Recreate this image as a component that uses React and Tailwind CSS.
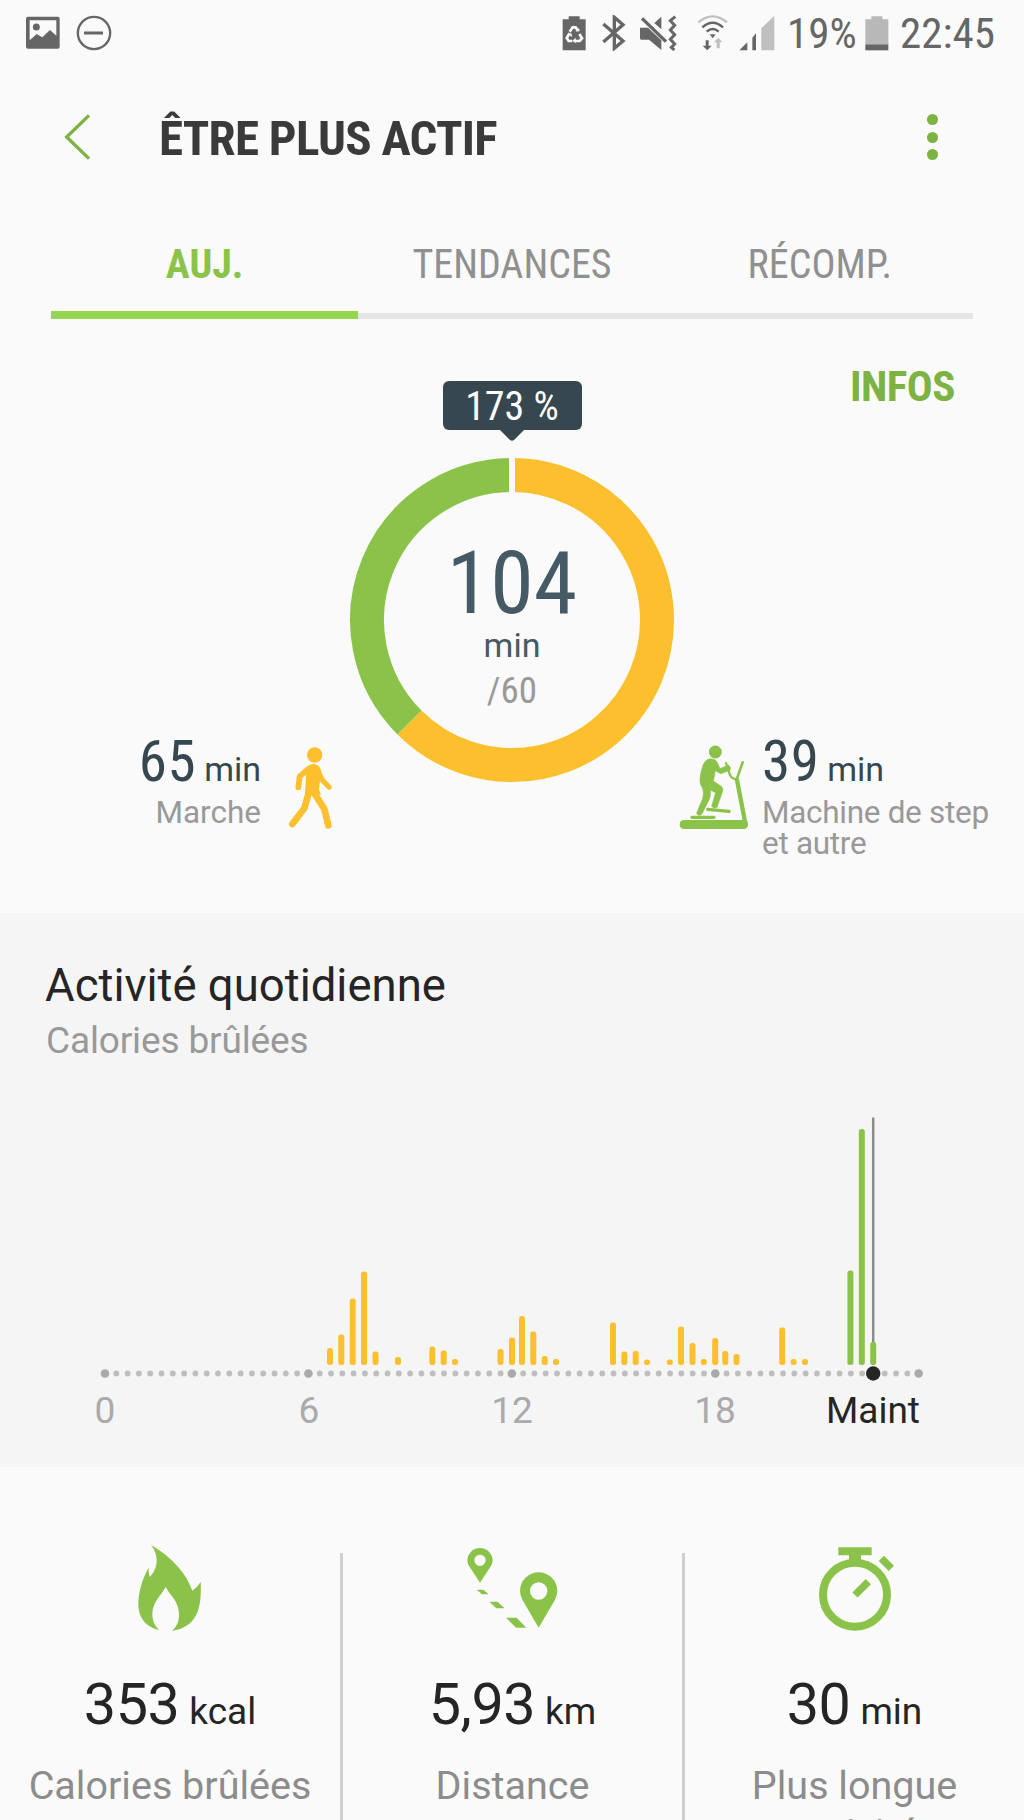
const condensed = "font-['Roboto_Condensed',Roboto,sans-serif] font-stretch-condensed";

// offset from midnight in px, bar height in px
const activityBars = [
  [225, 17], [236.3, 30.5], [247.7, 66.5], [259, 93.5], [270.5, 13.5], [293, 8],
  [327.3, 18.5], [338.7, 14.5], [350, 6], [395.5, 16], [407, 27.5], [417, 49],
  [428.3, 33.5], [439.7, 9], [451, 6], [508, 42.5], [519.3, 13.5], [530.7, 14],
  [542, 5.5], [564.8, 5.5], [576, 38.5], [587.5, 22], [598.8, 6], [610.2, 27],
  [620.3, 14], [631.5, 11], [677.2, 37.5], [688.6, 6], [700, 6],
  [745.4, 94.5, 'step'], [756.8, 236, 'step'], [768.2, 23, 'step'],
];

function StatusBar() {
  return (
    <div className={`flex h-[66px] items-center pl-[25px] text-[43px] leading-none text-[#666] ${condensed}`}>
      <svg className="h-9 w-[36px]" viewBox="75 44 108 108">
        <path fill="#666" fillRule="evenodd" d="M84 49H173Q179 49 179 55V139Q179 145 173 145H84Q78 145 78 139V55Q78 49 84 49ZM89 60V120L110 101L127 111L150 89L169 106V60Z" />
        <circle cx="109" cy="80" r="10.5" fill="#666" />
      </svg>
      <svg className="ml-[15px] h-9 w-9" viewBox="228 44 108 108" fill="none" stroke="#666">
        <circle cx="282" cy="98" r="48.5" strokeWidth="7" />
        <path d="M252 98H309" strokeWidth="9" />
      </svg>
      <div className="ml-auto flex items-center pr-[30px]">
        <svg className="h-9 w-6" viewBox="67 44 72 108">
          <path fill="#666" d="M69 57H87V48H120V57H138V150H69Z" />
          <g fill="none" stroke="#fafafa" strokeWidth="8">
            <path d="M90 94L99 81H108L115 92" />
            <path d="M119 101L127 114L120 122H106" />
            <path d="M98 122H87L81 113L90 99" />
          </g>
          <path d="M107 93h13l-2-10zM108 112v17l-10-8zM83 101l12-2 3 11z" fill="#fafafa" />
        </svg>
        <svg className="ml-4 h-9 w-6" viewBox="187 44 72 108" fill="none" stroke="#666" strokeWidth="10">
          <path d="M191 71L250 122L224 144V51L250 73L191 125" />
        </svg>
        <svg className="ml-[13px] h-9 w-[38px]" viewBox="300 44 114 108">
          <path fill="#666" d="M303 82H327L367 120V149L330 118H307Q303 118 303 114ZM346 68L367 49V87Z" />
          <path d="M309 54L381 124" stroke="#666" strokeWidth="10" />
          <path d="M409 49L394 61L407 75L394 89L407 103L394 117L407 131L397 141L406 149" fill="none" stroke="#666" strokeWidth="9" />
        </svg>
        <svg className="ml-5 h-9 w-[31px]" viewBox="473 44 93 108" fill="none" strokeWidth="7">
          <path d="M477 66Q520 30 563 66" stroke="#bfbfbf" />
          <path d="M489 81Q520 53 551 81M502 94Q520 78 538 94" stroke="#666" />
          <path d="M511 102H529L520 114ZM499 120H508V136H517L504 150L490 136H499Z" fill="#666" />
          <path d="M532 144H541V126H549L537 112L524 126H532Z" fill="#bfbfbf" />
        </svg>
        <svg className="ml-[11px] h-9 w-9" viewBox="599 44 108 108">
          <path fill="#666" d="M600 150L624 126V150ZM639 112L650 99V150H639Z" />
          <path fill="#bfbfbf" d="M666 84L705 46V150H666Z" />
        </svg>
        <span className="ml-3 w-[69px] whitespace-nowrap">19%</span>
        <svg className="ml-[9px] h-9 w-6" viewBox="977 44 72 108">
          <path fill="#b8b8b8" d="M978 57H996V48H1029V57H1047V132H978Z" />
          <path fill="#666" d="M978 132H1047V150H978Z" />
        </svg>
        <span className="ml-[11px] w-[94px] whitespace-nowrap">22:45</span>
      </div>
    </div>
  );
}

function Header() {
  return (
    <header className="flex h-[142px] items-center pl-[62px] pr-[86px]">
      <svg className="h-[50px] w-[30px]" viewBox="186 334 90 150" fill="none" stroke="#7cb342" strokeWidth="10">
        <path d="M267 344L200 409L267 474" />
      </svg>
      <h1 className={`ml-[67px] pt-[2px] text-[49px] font-bold leading-none tracking-[-0.75px] text-[#3a3a3a] ${condensed}`}>ÊTRE PLUS ACTIF</h1>
      <div className="ml-auto flex flex-col gap-[6.5px]">
        <span className="size-[11px] rounded-full bg-[#7cb342]" />
        <span className="size-[11px] rounded-full bg-[#7cb342]" />
        <span className="size-[11px] rounded-full bg-[#7cb342]" />
      </div>
    </header>
  );
}

function Tabs() {
  return (
    <nav className={`mx-[51px] grid h-[111px] grid-cols-3 text-center text-[40px] leading-[113px] text-[#909090] ${condensed}`}>
      <div className="flex flex-col font-bold text-[#8bc34a]">
        <span className="h-[103px]">AUJ.</span>
        <span className="h-[8px] bg-[#96d552]" />
      </div>
      <div className="flex flex-col">
        <span className="h-[105px]">TENDANCES</span>
        <span className="h-[6px] bg-[#e5e5e5]" />
      </div>
      <div className="flex flex-col">
        <span className="h-[105px] pl-px">RÉCOMP.</span>
        <span className="h-[6px] bg-[#e5e5e5]" />
      </div>
    </nav>
  );
}

function GoalRing() {
  return (
    <div className="relative size-[326px]">
      <svg className="size-full" viewBox="-163 -163 326 326" fill="none" strokeWidth="34">
        <path d="M0 -145A145 145 0 1 1 -102.53 102.53" stroke="#fcc02e" />
        <path d="M-102.53 102.53A145 145 0 0 1 0 -145" stroke="#8bc34a" />
        <path d="M0 -163V-126" stroke="#fafafa" strokeWidth="6" />
      </svg>
      <div className="absolute inset-0 flex flex-col items-center text-[#455a64]">
        <span className={`mt-[82px] text-[88px] leading-[88px] ${condensed}`}>104</span>
        <span className="-mt-[2px] text-[34px] leading-[40px]">min</span>
        <span className={`mt-[4px] text-[37px] leading-[44px] text-[#999] ${condensed}`}>/60</span>
      </div>
    </div>
  );
}

function Duration({ value }) {
  return (
    <div className="flex h-[58px] items-baseline leading-[57px] text-[#37474f]">
      <span className={`text-[57px] tracking-[0.5px] ${condensed}`}>{value}</span>
      <span className="ml-[8px] text-[34px]">min</span>
    </div>
  );
}

function Summary() {
  return (
    <section className="h-[594px]">
      <div className={`h-[62px] pr-[69px] text-right text-[43px] font-bold leading-[134px] tracking-[-0.5px] text-[#7cb342] ${condensed}`}>INFOS</div>
      <div className="flex flex-col items-center">
        <div className={`flex h-[49px] w-[139px] items-center justify-center rounded-md bg-[#37474f] pt-[2px] text-[40px] leading-none text-white ${condensed}`}>173 %</div>
        <svg className="h-[11px] w-6" viewBox="0 0 24 11"><path d="M0 0H24L14 10Q12 11.5 10 10Z" fill="#37474f" /></svg>
      </div>
      <div className="mt-[16px] flex justify-center">
        <div className="mt-[276px] flex w-[349px] justify-end pr-[14px]">
          <div className="flex flex-col items-end whitespace-nowrap">
            <Duration value="65" />
            <div className="mt-[6px] text-[31.5px] leading-[31px] text-[#999]">Marche</div>
          </div>
          <svg className="ml-[26px] mt-[13px] h-[84px] w-[48px]" viewBox="500 79 144 252" fill="none" stroke="#fcc02e" strokeLinecap="round" strokeLinejoin="round">
            <circle cx="583" cy="106" r="23" fill="#fcc02e" stroke="none" />
            <path d="M558 145Q567 133 583 133Q598 135 602 154L596 210L602 225L554 222L557 175Z" fill="#fcc02e" stroke="none" />
            <path d="M568 145L538 170L534 203" strokeWidth="17" />
            <path d="M592 150L604 179L626 202" strokeWidth="16" />
            <path d="M566 216L552 266L516 313" strokeWidth="20" />
            <path d="M583 222L612 268L624 317" strokeWidth="20" />
          </svg>
        </div>
        <GoalRing />
        <div className="mt-[276px] flex w-[349px] whitespace-nowrap">
          <svg className="mt-[8px] ml-[2px] h-[90px] w-[72px]" viewBox="51 63 216 270" fill="none" stroke="#8bc34a" strokeLinecap="round">
            <circle cx="166" cy="96" r="19.5" fill="#8bc34a" stroke="none" />
            <path fill="#8bc34a" strokeWidth="2" d="M150 117Q166 115 172 128L180 146L205 135Q214 141 210 151L182 161L166 152L160 183L185 200Q191 207 187 216L171 262Q162 268 155 259L167 218L151 210Q153 231 146 242L125 283Q114 290 110 279L128 236Q132 220 128 205Q116 190 121 169Q126 136 135 125Q140 117 150 117Z" />
            <rect x="59" y="300" width="205" height="27" rx="13" fill="#8bc34a" stroke="none" />
            <path d="M231 180L256 310" strokeWidth="13" />
            <path d="M248 127L230 178" strokeWidth="8" />
            <path d="M198 129L210 165Q216 177 230 178" strokeWidth="7" />
            <path d="M96 292H162M143 268L207 274" strokeWidth="10" />
          </svg>
          <div className="ml-[13px]">
            <Duration value="39" />
            <div className="mt-[6px] text-[31.5px] leading-[31px] tracking-[-0.3px] text-[#999]">Machine de step<br />et autre</div>
          </div>
        </div>
      </div>
    </section>
  );
}

function ActivityChart() {
  const dots = Array.from({ length: 73 }, (_, i) => i);
  return (
    <section className="h-[554px] bg-[#f5f5f5] pt-[46px]">
      <h2 className="pl-[45px] text-[45.5px] leading-[54px] text-[#252525]">Activité quotidienne</h2>
      <p className="pl-[46px] text-[37px] leading-[56px] tracking-[-0.15px] text-[#999]">Calories brûlées</p>
      <svg className="ml-[90px] mt-[36px] h-[280px] w-[844px]" viewBox="-15 0 844 280">
        <path d="M768.2 12.5V260" stroke="#8c8c8c" strokeWidth="2.5" />
        {activityBars.map(([x, h, kind]) => (
          <rect key={x} x={x - 3} y={260 - h} width="6" height={h} rx="2.5" fill={kind === 'step' ? '#8bc34a' : '#fcc02e'} />
        ))}
        {dots.map((i) => (
          <circle key={i} cx={i * 11.301} cy="268.5" r={i % 18 === 0 ? 4.3 : 2.9} fill={i % 18 === 0 ? '#aaa' : '#bebebe'} />
        ))}
        <circle cx="768.2" cy="268.5" r="7.2" fill="#252525" />
      </svg>
      <div className="-mt-[6px] flex pl-[75px] text-center text-[37px] leading-[64px] text-[#aaa]">
        <span className="w-[60px]">0</span>
        <span className="ml-[144px] w-[60px]">6</span>
        <span className="ml-[143px] w-[60px]">12</span>
        <span className="ml-[143px] w-[60px]">18</span>
        <span className="ml-[68px] w-[120px] text-[#252525]">Maint</span>
      </div>
    </section>
  );
}

function FlameIcon() {
  return (
    <svg className="h-[90px] w-[70px]" viewBox="405 130 210 270" fill="#8bc34a">
      <path d="M453 136C520 175 560 225 577 273Q593 262 602 247C606 330 590 382 515 394C542 375 545 330 520 295Q505 277 497 262Q489 276 478 290C450 325 450 365 477 391C430 380 410 345 416 295C420 260 432 230 446 203Q444 218 449 232C472 210 480 170 453 136Z" />
    </svg>
  );
}

function RouteIcon() {
  return (
    <svg className="h-[90px] w-[96px]" viewBox="374 130 288 270" fill="#8bc34a">
      <path fillRule="evenodd" d="M419 145A38 38 0 0 1 457 183Q457 192 450 202L419 249L388 202Q381 192 381 183A38 38 0 0 1 419 145ZM419 165A17 17 0 1 0 419 199A17 17 0 1 0 419 165Z" />
      <path fillRule="evenodd" d="M595 218A56 56 0 0 1 651 274Q651 286 644 300L595 384L546 300Q539 286 539 274A56 56 0 0 1 595 218ZM595 248A26 26 0 1 0 595 300A26 26 0 1 0 595 248Z" />
      <path d="M409 270H429L445 284H425ZM447 306H471L493 326H468ZM497 354H529L558 384H527Z" />
    </svg>
  );
}

function StopwatchIcon() {
  return (
    <svg className="h-[90px] w-[80px]" viewBox="403 130 240 270" fill="none" stroke="#8bc34a">
      <circle cx="523" cy="285" r="96" strokeWidth="24" />
      <path d="M473 155H573" strokeWidth="24" />
      <path d="M523 160V185" strokeWidth="36" />
      <path d="M523 286L563 246M602 176L632 206" strokeWidth="22" />
    </svg>
  );
}

function Stat({ icon, value, unit, children }) {
  return (
    <div className="flex flex-col items-center text-center whitespace-nowrap">
      {icon}
      <div className="mt-[40px] flex h-[64px] items-baseline leading-[64px] text-[#252525]">
        <span className="text-[57.5px] tracking-[-0.5px]">{value}</span>
        <span className="ml-[10px] text-[37px]">{unit}</span>
      </div>
      <div className="mt-[25px] text-[39.5px] leading-[48px] text-[#8c8c8c]">{children}</div>
    </div>
  );
}

export default function App() {
  return (
    <div className="h-[1820px] w-[1024px] overflow-hidden bg-[#fafafa] font-['Roboto',sans-serif]">
      <StatusBar />
      <Header />
      <Tabs />
      <Summary />
      <ActivityChart />
      <section className="flex pt-[76px]">
        <div className="w-[340px]"><Stat icon={<FlameIcon />} value="353" unit="kcal">Calories brûlées</Stat></div>
        <div className="mt-[10px] w-[3px] bg-[#cfcfcf]" />
        <div className="w-[339px]"><Stat icon={<RouteIcon />} value="5,93" unit="km">Distance</Stat></div>
        <div className="mt-[10px] w-[3px] bg-[#cfcfcf]" />
        <div className="w-[339px]"><Stat icon={<StopwatchIcon />} value="30" unit="min">Plus longue<br />activité</Stat></div>
      </section>
    </div>
  );
}
